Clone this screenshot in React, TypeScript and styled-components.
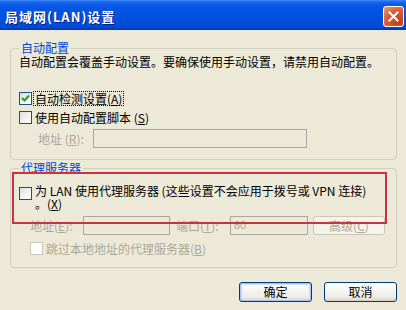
import React from "react";
import styled, { createGlobalStyle } from "styled-components";

const GlobalStyle = createGlobalStyle`
  html, body { margin: 0; padding: 0; background: #ECE9D8; }
  body { font-family: "Noto Sans CJK SC", "Liberation Sans", sans-serif; font-size: 12px; color: #000; }
  * { box-sizing: border-box; }
`;

const Window = styled.div`
  width: 406px;
  height: 310px;
  overflow: hidden;
  background: #ECE9D8;
  display: flex;
  flex-direction: column;
`;

const TitleBar = styled.div`
  height: 30px;
  flex: none;
  display: flex;
  align-items: center;
  justify-content: space-between;
  padding: 0 2px 0 5px;
  background: linear-gradient(
    to bottom,
    #3D8CF7 0px,
    #1A66EC 2px,
    #0A58E6 5px,
    #0054E3 12px,
    #0050DC 20px,
    #004CD6 26px,
    #0045C8 28px,
    #0036A8 30px
  );
`;

const Title = styled.div`
  color: #fff;
  font-weight: bold;
  font-size: 13px;
  line-height: 16px;
  letter-spacing: 1px;
  text-shadow: 1px 1px 0 #0A1E8A;
  padding-top: 3px;
`;

const CloseBtn = styled.div`
  width: 21px;
  height: 21px;
  margin-top: 3px;
  border: 1px solid #fff;
  border-radius: 3px;
  display: flex;
  align-items: center;
  justify-content: center;
  background: radial-gradient(circle at 75% 80%, #C23E14 0%, #E05A2E 55%, #F19A7A 100%);
`;

const Body = styled.div`
  flex: 1;
  display: flex;
  flex-direction: column;
  padding: 11px 9px 0 10px;
`;

const Group = styled.fieldset<{ $mt?: number; $pb?: number }>`
  margin: ${(p) => p.$mt ?? 0}px 0 0;
  padding: 0 8px ${(p) => p.$pb ?? 11}px;
  border: 1px solid #D0D0BF;
  border-radius: 4px;
  position: relative;
  min-width: 0;
`;

const Legend = styled.legend`
  padding: 0 2px;
  color: #0046D5;
  font-size: 12px;
  line-height: 14px;
`;

const Stack = styled.div`
  display: flex;
  flex-direction: column;
`;

const Text = styled.div<{ $mt?: number }>`
  margin-top: ${(p) => p.$mt ?? 0}px;
  line-height: 14px;
  white-space: nowrap;
`;

const Row = styled.div<{ $mt?: number; $indent?: number; $h?: number }>`
  display: flex;
  align-items: center;
  margin-top: ${(p) => p.$mt ?? 0}px;
  padding-left: ${(p) => p.$indent ?? 0}px;
  height: ${(p) => p.$h ?? 15}px;
`;

const TopRow = styled.div<{ $mt?: number }>`
  display: flex;
  align-items: flex-start;
  margin-top: ${(p) => p.$mt ?? 0}px;
`;

const Box = styled.span<{ $disabled?: boolean; $mt?: number }>`
  flex: none;
  width: 13px;
  height: 13px;
  margin-top: ${(p) => p.$mt ?? 0}px;
  border: 1px solid ${(p) => (p.$disabled ? "#CAC8BB" : "#1C5180")};
  background: ${(p) =>
    p.$disabled ? "#FFFFFF" : "linear-gradient(135deg, #DCDCD7 0%, #F2F2EF 55%, #FFFFFF 100%)"};
  display: flex;
  align-items: center;
  justify-content: center;
`;

const Label = styled.span<{ $disabled?: boolean; $focus?: boolean }>`
  margin-left: 2px;
  padding: 0 1px;
  line-height: 13px;
  color: ${(p) => (p.$disabled ? "#ACA899" : "#000")};
  outline: ${(p) => (p.$focus ? "1px dotted #000" : "none")};
  white-space: nowrap;
`;

const WrapLabel = styled.span`
  margin-left: 2px;
  padding: 0 1px;
  line-height: 13px;
  white-space: nowrap;
`;

const FieldLabel = styled.span<{ $w: number; $ml?: number }>`
  width: ${(p) => p.$w}px;
  margin-left: ${(p) => p.$ml ?? 0}px;
  flex: none;
  color: #ACA899;
  line-height: 14px;
  white-space: nowrap;
`;

const Input = styled.div<{ $w: number }>`
  width: ${(p) => p.$w}px;
  height: 19px;
  flex: none;
  border: 1px solid #A9A89F;
  background: #ECE9D8;
  color: #ACA899;
  padding: 0 3px;
  line-height: 17px;
  font-family: "Liberation Sans", sans-serif;
  font-size: 11px;
`;

const XpButton = styled.div<{ $default?: boolean; $disabled?: boolean; $w?: number; $h?: number; $ml?: number }>`
  width: ${(p) => p.$w ?? 73}px;
  height: ${(p) => p.$h ?? 20}px;
  margin-left: ${(p) => p.$ml ?? 0}px;
  flex: none;
  border-radius: 3px;
  border: 1px solid ${(p) => (p.$disabled ? "#C9C7BA" : "#003C74")};
  background: ${(p) =>
    p.$disabled
      ? "#F5F4EA"
      : "linear-gradient(to bottom, #FFFFFF 0%, #F6F5F1 40%, #ECEBE6 80%, #D6D0C5 100%)"};
  box-shadow: ${(p) =>
    p.$default ? "inset 0 0 0 1px #A8C4F4, inset 0 0 0 2px #CEDDF7" : "none"};
  color: ${(p) => (p.$disabled ? "#ACA899" : "#000")};
  display: flex;
  align-items: center;
  justify-content: center;
  line-height: 14px;
  white-space: nowrap;
`;

const Footer = styled.div`
  display: flex;
  justify-content: flex-end;
  gap: 12px;
  margin-top: 14px;
`;

const Annotation = styled.div`
  position: absolute;
  left: 1px;
  top: -3px;
  width: 375px;
  height: 52px;
  border: 2px solid #C8333F;
  pointer-events: none;
`;

const Check = () => (
  <svg width="9" height="9" viewBox="0 0 9 9">
    <path d="M1 4 L3.5 6.5 L8 1.5" stroke="#21A121" strokeWidth="2" fill="none" />
  </svg>
);

const CloseX = () => (
  <svg width="11" height="11" viewBox="0 0 11 11">
    <path d="M1.5 1.5 L9.5 9.5 M9.5 1.5 L1.5 9.5" stroke="#fff" strokeWidth="2" strokeLinecap="square" />
  </svg>
);

export default function App() {
  return (
    <>
      <GlobalStyle />
      <Window>
        <TitleBar>
          <Title>局域网(LAN)设置</Title>
          <CloseBtn>
            <CloseX />
          </CloseBtn>
        </TitleBar>
        <Body>
          <Group>
            <Legend>自动配置</Legend>
            <Stack>
              <Text>自动配置会覆盖手动设置。要确保使用手动设置，请禁用自动配置。</Text>
              <Row $mt={22}>
                <Box>
                  <Check />
                </Box>
                <Label $focus>
                  自动检测设置(<u>A</u>)
                </Label>
              </Row>
              <Row $mt={4}>
                <Box />
                <Label>
                  使用自动配置脚本 (<u>S</u>)
                </Label>
              </Row>
              <Row $mt={4} $indent={19} $h={19}>
                <FieldLabel $w={55}>
                  地址 (<u>R</u>):
                </FieldLabel>
                <Input $w={214} />
              </Row>
            </Stack>
          </Group>
          <Group $mt={1}>
            <Legend>代理服务器</Legend>
            <Annotation />
            <Stack>
              <TopRow $mt={9}>
                <Box $mt={3} />
                <WrapLabel>
                  为 LAN 使用代理服务器 (这些设置不会应用于拨号或 VPN 连接)
                  <br />。(<u>X</u>)
                </WrapLabel>
              </TopRow>
              <Row $mt={6} $indent={11} $h={19}>
                <FieldLabel $w={53}>
                  地址(<u>E</u>):
                </FieldLabel>
                <Input $w={87} />
                <FieldLabel $w={54} $ml={6}>
                  端口(<u>T</u>):
                </FieldLabel>
                <Input $w={78}>80</Input>
                <XpButton $disabled $w={72} $h={19} $ml={5}>
                  高级(<u>C</u>)
                </XpButton>
              </Row>
              <Row $mt={6} $indent={11}>
                <Box $disabled />
                <Label $disabled>
                  跳过本地地址的代理服务器(<u>B</u>)
                </Label>
              </Row>
            </Stack>
          </Group>
          <Footer>
            <XpButton $default>确定</XpButton>
            <XpButton>取消</XpButton>
          </Footer>
        </Body>
      </Window>
    </>
  );
}
